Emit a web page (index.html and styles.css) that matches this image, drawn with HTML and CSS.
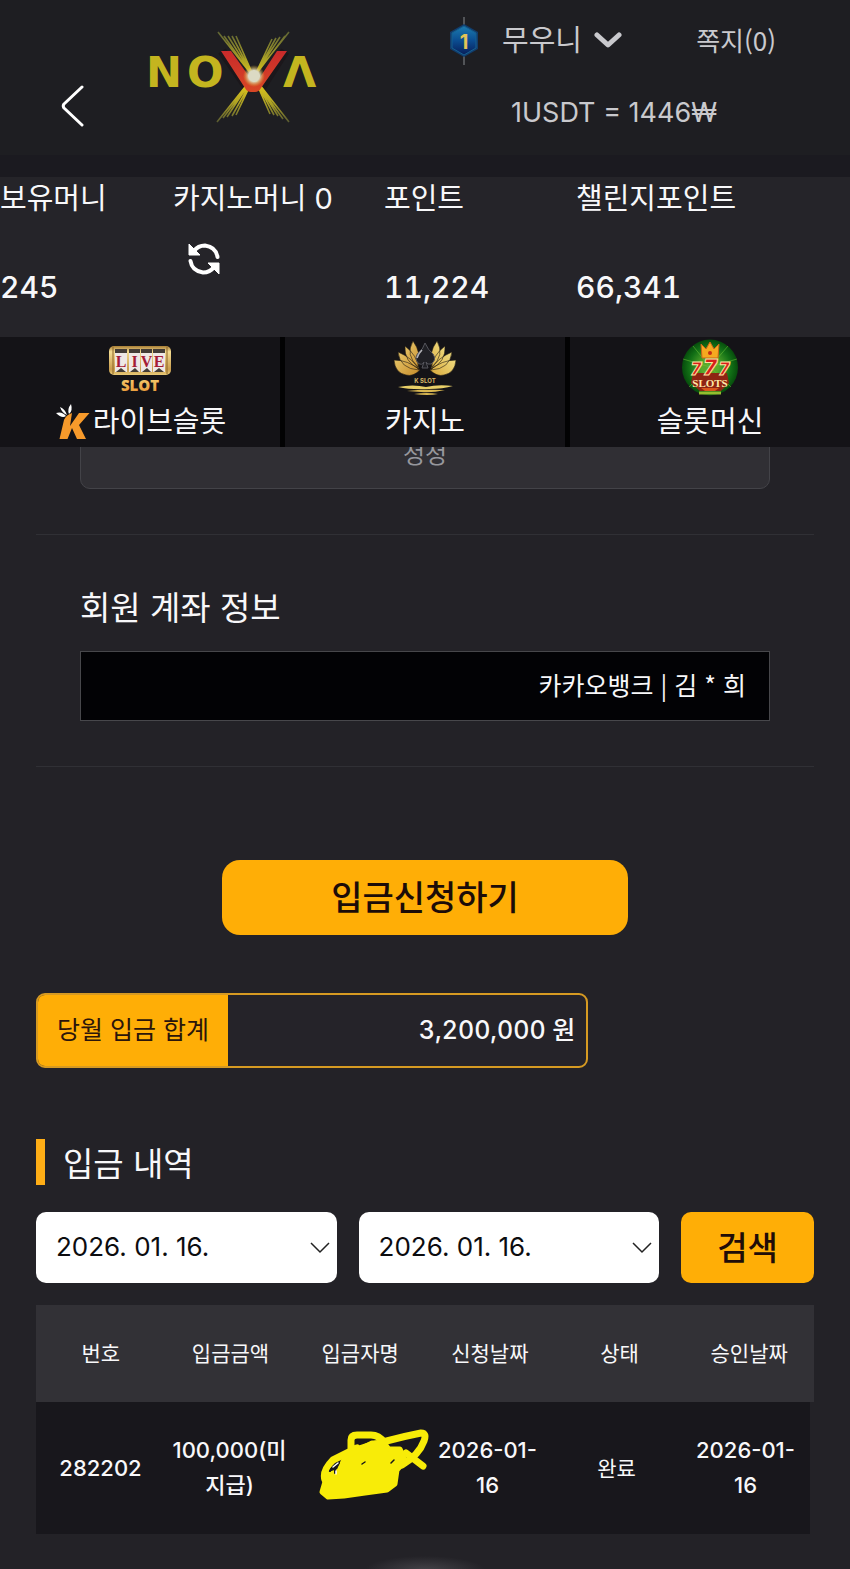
FILE: index.html
```html
<!DOCTYPE html>
<html lang="ko">
<head>
<meta charset="utf-8">
<meta name="viewport" content="width=device-width, initial-scale=1">
<title>NOVA 입금신청</title>
<link rel="stylesheet" href="styles.css">
</head>
<body>
<div class="top">
  <header class="header">
    <button class="back" type="button" aria-label="뒤로">
      <svg width="24" height="42" viewBox="0 0 24 42" fill="none" stroke="#fff" stroke-width="3" stroke-linecap="round" stroke-linejoin="round"><path d="M21 2 3 19q-1.500 2 0 4L21 40"/></svg>
    </button>
    <a class="logo" href="#" aria-label="NOVA">
      <svg width="172" height="94" viewBox="0 0 172 94">
        <defs>
          <linearGradient id="ray" gradientUnits="userSpaceOnUse" x1="0" y1="0" x2="0" y2="94"><stop offset="0" stop-color="#5c6235"/><stop offset=".4" stop-color="#c4b51f"/><stop offset=".55" stop-color="#e2c91c"/><stop offset=".75" stop-color="#b3a623"/><stop offset="1" stop-color="#4c5033"/></linearGradient>
          <linearGradient id="vee" x1="0" y1="0" x2="0" y2="1"><stop offset="0" stop-color="#c92a2b"/><stop offset="1" stop-color="#d84725"/></linearGradient>
          <radialGradient id="orb"><stop offset=".5" stop-color="#dcdac4"/><stop offset="1" stop-color="#d8a51f" stop-opacity="0"/></radialGradient>
        </defs>
        <g class="wordmark"><text x="-1" y="56">N</text><text x="40" y="56">O</text><text x="136" y="56">Λ</text></g>
        <path d="m75 20 25 36h15l23-36" fill="none" stroke="#1b171b" stroke-width="9"/>
        <g stroke="url(#ray)" stroke-width="1.600" fill="none">
          <path d="M71 1 142 91M77 5 136 88M81 5 131 85M85 5 127 84M89 5 123 83M142 1 70 91M138 5 76 87M133 6 80 86M129 7 85 85M125 8 89 84"/>
        </g>
        <path d="M74 20h10l22 31h4l20-31h10l-26 37q-2 4-6 4h-4q-4 0-6-4z" fill="url(#vee)"/>
        <circle cx="107" cy="45" r="11" fill="url(#orb)"/>
      </svg>
    </a>
    <div class="account">
      <div class="account-row">
        <svg width="28" height="50" viewBox="0 0 28 50">
          <defs><linearGradient id="gem" x1="0" y1="0" x2="0" y2="1"><stop offset="0" stop-color="#1c7cb0"/><stop offset=".5" stop-color="#0b4d91"/><stop offset="1" stop-color="#081d58"/></linearGradient></defs>
          <path d="M14 1v48" stroke="#65676b" stroke-width="1.500"/>
          <path d="M14 8 28 16v17l-14 8-14-8V16z" fill="#123c6c"/>
          <path d="m14 10 12 7v15l-12 7-12-7V17z" fill="url(#gem)" stroke="#14618f"/>
          <text class="badge-number" x="14" y="33" text-anchor="middle">1</text>
        </svg>
        <button class="user" type="button">무우니
          <svg width="28" height="18" viewBox="0 0 28 18" fill="none" stroke="#c9c9cd" stroke-width="5" stroke-linecap="round" stroke-linejoin="round"><path d="m3 3 11 10L25 3"/></svg>
        </button>
        <a class="notes" href="#">쪽지(0)</a>
      </div>
      <p class="rate">1USDT = 1446₩</p>
    </div>
  </header>

  <section class="balances">
    <div class="balance"><span>보유머니</span><span class="amount">245</span></div>
    <div class="balance"><span>카지노머니 0</span>
      <button class="refresh" type="button" aria-label="새로고침">
        <svg width="32" height="32" viewBox="0 0 32 32" fill="none"><path d="M6 8Q10 2.500 17 2.500 28 4 29.500 14M26 24Q22 29.500 15 29.500 4 28 2.500 18" stroke="#fff" stroke-width="4" stroke-linecap="round"/><path d="M1 1v11h11zM31 31V20H20z" fill="#fff" stroke="#fff" stroke-linejoin="round"/></svg>
      </button>
    </div>
    <div class="balance"><span>포인트</span><span class="amount">11,224</span></div>
    <div class="balance"><span>챌린지포인트</span><span class="amount">66,341</span></div>
  </section>

  <nav class="tabs">
    <a class="tab" href="#">
      <svg width="64" height="58" viewBox="0 0 64 58">
        <defs>
          <linearGradient id="gold" x1="0" y1="0" x2="0" y2="1"><stop offset="0" stop-color="#a97e35"/><stop offset=".2" stop-color="#f4dc92"/><stop offset=".8" stop-color="#c99d4e"/><stop offset="1" stop-color="#e9cb78"/></linearGradient>
          <linearGradient id="amber" x1="0" y1="0" x2="0" y2="1"><stop offset="0" stop-color="#f8d77b"/><stop offset="1" stop-color="#e7912f"/></linearGradient>
        </defs>
        <rect x="1" y="7" width="62" height="29" rx="5" fill="url(#gold)"/>
        <path d="M5 8v27M59 8v27" stroke="#8c6526"/>
        <path d="M7 10h12v23H7zM21 10h11v23H21zM33 10h11v23H33zM45 10h12v23H45z" fill="#eee8e5"/>
        <path d="M7 10h12v4H7zM21 10h11v4H21zM33 10h11v4H33zM45 10h12v4H45z" fill="#433c36"/>
        <path d="m8 33 5-4 5 4zM22 33l5-4 4 4zM34 33l5-4 4 4zM46 33l5-4 5 4z" fill="#433c36"/>
        <g class="live-text" text-anchor="middle"><text x="13" y="28">L</text><text x="26.500" y="28">I</text><text x="38.500" y="28">V</text><text x="51" y="28">E</text></g>
        <text class="slot-text" x="32" y="52" text-anchor="middle">SLOT</text>
      </svg>
      <span class="tab-label">
        <svg width="36" height="38" viewBox="0 0 36 38"><path d="M2 10q6-2 10 3-4 3-10-3zM6 4q5 2 7 8-5-2-7-8zM17 1q2 7-2 10-2-5 2-10z" fill="#fff"/><path d="M18 10l-2 13 9-13h10.500L25 22l7 14h-9l-5-11-4.500 11H5.500L10 17q2-5 8-7z" fill="#f79a2b"/></svg>라이브슬롯</span>
    </a>
    <a class="tab" href="#">
      <svg width="64" height="58" viewBox="0 0 64 58">
        <defs>
          <linearGradient id="petal" x1="0" y1="0" x2="1" y2="1"><stop offset="0" stop-color="#f0d77c"/><stop offset="1" stop-color="#c68a28"/></linearGradient>
          <linearGradient id="petal-light" x1="1" y1="0" x2="0" y2="1"><stop offset="0" stop-color="#f7ee98"/><stop offset="1" stop-color="#d8a73a"/></linearGradient>
        </defs>
        <g fill="url(#petal)" stroke="#211b12" stroke-width=".600">
          <path d="M20 2q9 12 5 26-13-12-5-26zM12 7q12 9 14 23-15-7-14-23zM5 13q15 6 21 18-19-1-21-18zM1 21q14 0 26 10Q20 38 13 36 2 34 1 21z"/>
        </g>
        <g fill="url(#petal-light)" stroke="#211b12" stroke-width=".600">
          <path d="M44 2q-9 12-5 26 13-12 5-26zM52 7Q40 16 38 30q15-7 14-23zM59 13q-15 6-21 18 19-1 21-18zM63 21q-14 0-26 10 7 7 14 5 11-2 12-15z"/>
        </g>
        <path d="M32 4q3 7 8 11 4 6-2 10-4 1-5-2l2 6h-6l2-6q-2 4-6 1-4-5 0-10 5-3 7-10z" fill="#202025" stroke="#55555c"/>
        <path d="M29 11q-4 4-5 8" stroke="#b3b3b7" stroke-width="1.500" fill="none"/>
        <text class="kslot-text" x="32" y="44" text-anchor="middle">K SLOT</text>
        <path d="M5 48q15-3 28 0 12-3 27-1-10 3-24 3-18 1-31-2z" fill="#e8cf68"/>
        <path d="M14 52q15-2 38-1-13 3-24 2zM21 55q13-2 24 0-10 2-24 0z" fill="#d9b751"/>
      </svg>
      <span class="tab-label">카지노</span>
    </a>
    <a class="tab" href="#">
      <svg width="58" height="58" viewBox="0 0 58 58">
        <defs>
          <radialGradient id="felt"><stop offset=".3" stop-color="#58a92c"/><stop offset=".75" stop-color="#127016"/><stop offset="1" stop-color="#064c0c"/></radialGradient>
        </defs>
        <circle cx="29" cy="28.500" r="28" fill="url(#felt)"/>
        <path d="m29 28-17-21M29 28 47 7M29 28 2 20M29 28l27-8M29 28 8 48M29 28l21 20" stroke="#75c93b" opacity=".5"/>
        <path d="m20 5 5 5 4-7 4 7 5-5-1 14H21z" fill="#f6a91f" stroke="#c9641a"/><circle cx="29" cy="14" r="2" fill="#c52c15"/>
        <path d="M12 34h34l2 10-8 8H19l-9-8z" fill="#8e2413"/>
        <g class="seven" text-anchor="middle"><text x="15" y="36">7</text><text x="43" y="36">7</text><text class="seven-big" x="29" y="36">7</text></g>
        <text class="slots-text" x="29" y="48" text-anchor="middle">SLOTS</text>
        <path d="M20 49h18l-4 3H24z" fill="#d9581c"/><path d="M18 54h22" stroke="#94bd2f" stroke-width="3"/>
      </svg>
      <span class="tab-label">슬롯머신</span>
    </a>
  </nav>
</div>

<main class="content">
  <section class="block block-first"><button class="reset" type="button">정정</button></section>
  <section class="block block-account">
    <label class="title" for="account">회원 계좌 정보</label>
    <input class="account-field" id="account" type="text" value="카카오뱅크 | 김 * 희" readonly>
  </section>
  <button class="submit" type="button">입금신청하기</button>
  <div class="total"><span class="total-label">당월 입금 합계</span><span class="total-value">3,200,000 원</span></div>
  <h2 class="heading">입금 내역</h2>
  <form class="filters">
    <div class="date">
      <select aria-label="시작일"><option>2026. 01. 16.</option></select>
      <svg width="20" height="12" viewBox="0 0 20 12" fill="none" stroke="#222" stroke-width="1.500"><path d="m1 1 9 9 9-9"/></svg>
    </div>
    <div class="date">
      <select aria-label="종료일"><option>2026. 01. 16.</option></select>
      <svg width="20" height="12" viewBox="0 0 20 12" fill="none" stroke="#222" stroke-width="1.500"><path d="m1 1 9 9 9-9"/></svg>
    </div>
    <button class="search" type="button">검색</button>
  </form>
  <table class="history">
    <thead><tr><th>번호</th><th>입금금액</th><th>입금자명</th><th>신청날짜</th><th>상태</th><th>승인날짜</th></tr></thead>
    <tbody><tr>
      <td>282202</td><td>100,000(미지급)</td>
      <td class="masked">
        <svg class="scribble" width="110" height="74" viewBox="0 0 110 74" fill="none" stroke="#f8ec08" stroke-linecap="round" stroke-linejoin="round">
          <path d="M32 24V12q0-5 6-5h14q8 0 14 8M28 25Q66 12 102 5q6 0 3 8-5 14-22 24M87 25l17 13M14 32Q3 43 6 52M14 32l24-12" stroke-width="7"/>
          <path d="m26 29 27-14h12l5 6h11l5 12-8 9-2 14-8 6-22 3-21 3-16 1-6-5 5-17 12-4z" fill="#f8ec08" stroke-width="5"/>
          <path d="m11 43q3-6 9-8l-4 6v4" stroke="#17171b" stroke-width="2"/>
          <path d="m14 39 5-4M17 43v3" stroke="#fff" stroke-width="1.500"/>
          <path d="m43 36 3-2M72 35l3-3" stroke="#17171b" stroke-width="1.500"/>
        </svg>
      </td>
      <td>2026-01-16</td><td class="state">완료</td><td>2026-01-16</td>
    </tr></tbody>
  </table>
</main>
<div class="glow"></div>
</body>
</html>
```

FILE: styles.css
```css
* { box-sizing: border-box; }
body {
  margin: 0;
  background: #232227;
  color: #f8f8fa;
  font-family: Inter, "Noto Sans CJK KR", sans-serif;
  font-size: 29px;
  font-weight: 400;
}
button, select, input { font: inherit; color: inherit; border: 0; padding: 0; margin: 0; }
button { background: none; cursor: pointer; }
a { color: inherit; text-decoration: none; }
svg { display: block; flex: none; }
p, h2 { margin: 0; font-weight: 400; }
.notes, .title, .account-field, .submit, .search, .reset, .heading {
  font-family: "Noto Sans CJK KR", sans-serif;
}

.top { position: relative; z-index: 1; }
.header {
  display: flex;
  height: 177px;
  padding-left: 61px;
  padding-right: 72px;
  background: linear-gradient(#1e1e22 155px, #1b1a20 155px);
}
.back { margin-top: 85px; align-self: flex-start; }
.logo { margin: 31px auto 0 62px; }
.wordmark { fill: #c4b51f; font: 700 43px "DejaVu Sans", sans-serif; }
.account { width: 328px; color: #c9c9cd; padding-top: 16px; }
.account-row { display: flex; align-items: center; height: 50px; }
.badge-number { fill: #e3c456; font: 700 20px Inter, sans-serif; }
.user { display: flex; align-items: center; gap: 12px; margin-left: 24px; line-height: 40px; }
.notes { margin: 0 2px 0 auto; font-size: 26px; line-height: 46px; padding-bottom: 2px; }
.rate { margin-top: 27px; font-size: 27px; line-height: 40px; text-align: center; }

.balances {
  display: grid;
  grid-template-columns: 173fr 211fr 192fr 274fr;
  height: 160px;
  background: #252429;
}
.balance { display: flex; flex-direction: column; align-items: flex-start; line-height: 44px; white-space: nowrap; }
.amount { margin-top: 44px; font-size: 30px; font-weight: 500; font-variant-numeric: tabular-nums; }
.refresh { margin: 22px 0 0 15px; }

.tabs { display: grid; grid-template-columns: repeat(3, 1fr); gap: 5px; background: #020203; }
.tab { display: flex; flex-direction: column; align-items: center; gap: 5px; padding: 2px 0 5px; background: #141317; }
.tab-label { display: flex; align-items: center; gap: 3px; line-height: 40px; height: 40px; }
.live-text { fill: #a51c36; font: 700 16px "Liberation Serif", serif; }
.slot-text { fill: url(#amber); font: 800 15px "Open Sans", sans-serif; }
.kslot-text { fill: #d8b665; font: 700 6px Inter, sans-serif; }
.seven { fill: #d5201b; stroke: #ffe2a0; stroke-width: 1px; font: italic 900 17px Inter, sans-serif; }
.seven-big { font-size: 22px; }
.slots-text { fill: #ffe9a8; font: 700 11px "Liberation Serif", serif; }

.content { padding: 0 36px; }
.block { padding: 0 44px 45px; border-bottom: 1px solid #303035; }
.reset {
  display: block;
  width: 100%;
  height: 70px;
  margin-top: -28px;
  border: 1px solid #434348;
  border-radius: 10px;
  background: #302f34;
  color: #96979d;
  font-size: 24px;
  padding-bottom: 4px;
}
.block-account { padding-top: 47px; }
.title { display: block; font-size: 33px; line-height: 48px; margin-bottom: 21px; }
.account-field {
  display: block;
  width: 100%;
  height: 70px;
  padding: 0 23px 4px;
  border: 1px solid #47474b;
  border-radius: 0;
  background: #020205;
  font-size: 25px;
  text-align: right;
}
.submit {
  display: block;
  width: 406px;
  max-width: 100%;
  height: 75px;
  padding-bottom: 4px;
  margin: 93px auto 58px;
  border-radius: 18px;
  background: #ffae06;
  color: #1c0c08;
  font-size: 34px;
  font-weight: 500;
}
.total {
  display: flex;
  width: 71%;
  height: 75px;
  border: 2px solid #d69a22;
  border-radius: 9px;
  background: #252329;
  line-height: 70px;
  font-size: 25px;
  overflow: hidden;
}
.total-label { padding: 0 19px; background: #ffae06; color: #2b150b; }
.total-value { flex: 1; padding-right: 11px; text-align: right; font-weight: 500; font-variant-numeric: tabular-nums; }
.heading {
  margin: 71px 0 27px;
  padding-left: 18px;
  border-left: 9px solid #ffae16;
  font-size: 33px;
  line-height: 46px;
}
.filters { display: grid; grid-template-columns: 301fr 301fr 133fr; gap: 22px; margin-bottom: 22px; }
.date { position: relative; }
.date select {
  appearance: none;
  display: block;
  width: 100%;
  height: 71px;
  padding: 0 20px 2px;
  border-radius: 10px;
  background: #fff;
  color: #0c0c0f;
  font-size: 26px;
}
.date svg { position: absolute; right: 7px; top: 30px; pointer-events: none; }
.search { height: 71px; padding-bottom: 4px; border-radius: 10px; background: #ffae06; color: #200c08; font-size: 33px; font-weight: 500; }

.history, .history thead, .history tbody { display: block; }
.history { font-size: 21px; line-height: 35px; }
.history tr { display: grid; grid-template-columns: repeat(6, 1fr); align-items: center; }
.history th, .history td { padding: 0; font-weight: 400; text-align: center; }
.history thead tr { height: 97px; background: #323136; }
.history tbody { margin-right: 4px; }
.history tbody tr { height: 132px; background: #18171c; }
.history td { padding: 0 5px; font-size: 22px; font-weight: 500; }
.history .state { font-size: 21px; font-weight: 400; }
.history .masked { position: relative; height: 74px; }
.scribble { position: absolute; left: 25px; top: -3px; }
.glow { height: 36px; background: radial-gradient(ellipse 60px 14px at 50% 100%, #434247, #232227); }
```
